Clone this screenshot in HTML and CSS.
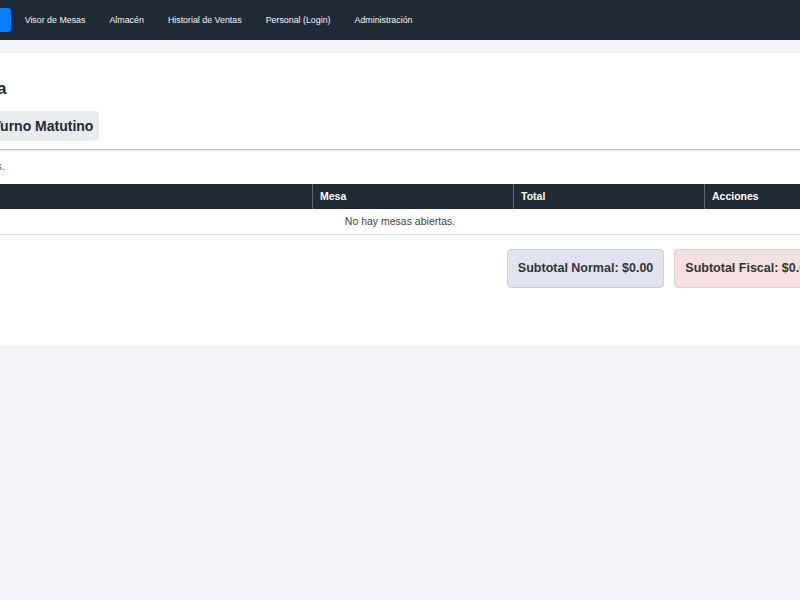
FILE: index.html
```html
<!DOCTYPE html>
<html lang="es">
  <head>
    <meta charset="UTF-8" />
    <meta name="viewport" content="width=device-width, initial-scale=1.0" />
    <title>Caja</title>
    <link rel="stylesheet" href="styles.css">
  </head>
  <body>
    <div class="shift">
      <nav class="navbar">
        <span class="brand">POS</span>
        <a class="nav-link active" href="#">Inicio</a>
        <a class="nav-link" href="#">Visor de Mesas</a>
        <a class="nav-link" href="#">Almacén</a>
        <a class="nav-link" href="#">Historial de Ventas</a>
        <a class="nav-link" href="#">Personal (Login)</a>
        <a class="nav-link" href="#">Administración</a>
      </nav>

      <main class="card">
        <h2 class="title">Gestión de Caja</h2>
        <div class="turno">Estado de caja: Turno Matutino</div>
        <hr />
        <p class="note">Mostrando mesas abiertas.</p>

        <table class="mesas">
          <thead>
            <tr>
              <th class="c-mesero">Mesero</th>
              <th class="c-mesa">Mesa</th>
              <th class="c-total">Total</th>
              <th>Acciones</th>
            </tr>
          </thead>
          <tbody>
            <tr>
              <td colspan="4" class="empty">No hay mesas abiertas.</td>
            </tr>
          </tbody>
        </table>

        <div class="totales">
          <div class="subtotal normal">Subtotal Normal: $0.00</div>
          <div class="subtotal fiscal">Subtotal Fiscal: $0.00</div>
          <div class="subtotal general">Total: $0.00</div>
        </div>
      </main>
    </div>
  </body>
</html>
```

FILE: styles.css
```css
html,
body {
  overflow-x: hidden;
}

body {
  font-family: "Liberation Sans", Arial, sans-serif;
  background: #f3f4f8;
  color: #333;
  margin: 0;
}

/* la vista esta desplazada a la derecha */
.shift {
  width: 1084px;
  margin-left: -142px;
}

.navbar {
  background: #1f2a36;
  height: 40px;
  display: flex;
  align-items: center;
  padding: 0 20px;
}

.brand {
  color: #fff;
  font-weight: bold;
  font-size: 14px;
  width: 88px;
}

.nav-link {
  color: #f4f5f7;
  text-decoration: none;
  font-size: 8.85px;
  line-height: 10px;
  padding: 7px 12px;
  border-radius: 3px;
}

.nav-link.active {
  background: #0b7bff;
  color: #fff;
  margin-right: 2px;
}

.card {
  background: #fff;
  margin-top: 13px;
  padding: 26px 20px 57px;
  box-shadow: 0 1px 3px rgba(0, 0, 0, 0.08);
}

.title {
  font-size: 17px;
  line-height: 20px;
  margin: 0;
  color: #1f2a36;
}

.turno {
  display: inline-block;
  margin-top: 12px;
  background: #e9ecef;
  color: #1f2a36;
  font-weight: bold;
  font-size: 14px;
  line-height: 16px;
  padding: 7px 6px 7px 8px;
  border-radius: 4px;
}

hr {
  margin: 8px 0 0;
  border: 0;
  border-top: 1px solid #c4c4c4;
  border-bottom: 1px solid #e6e6e6;
}

.note {
  margin: 8px 0 0;
  font-size: 10.5px;
  line-height: 14px;
  color: #555;
}

.mesas {
  width: 100%;
  margin-top: 11px;
  border-collapse: collapse;
  font-size: 10.5px;
}

.mesas th {
  background: #1f2a36;
  color: #fff;
  text-align: left;
  line-height: 13px;
  padding: 6px 7px;
  border-left: 1px solid #5b6570;
}

.mesas th:first-child {
  border-left: none;
}

.c-mesero {
  width: 420px;
}

.c-mesa {
  width: 186px;
}

.c-total {
  width: 176px;
}

.mesas td {
  line-height: 13px;
  padding: 6px 7px;
  border-bottom: 1px solid #ddd;
  color: #444;
}

.empty {
  text-align: center;
}

.totales {
  display: flex;
  justify-content: flex-end;
  gap: 10px;
  margin-top: 14px;
}

.subtotal {
  font-weight: bold;
  font-size: 12.5px;
  line-height: 13px;
  padding: 12px 10px;
  border-radius: 4px;
  border: 1px solid;
}

.normal {
  background: #e1e3f1;
  border-color: #c7cdee;
}

.fiscal {
  background: #f3e1e1;
  border-color: #efc7c7;
}

.general {
  padding: 12px 9px;
  background: #e1f1e4;
  border-color: #c7eecd;
}
```
